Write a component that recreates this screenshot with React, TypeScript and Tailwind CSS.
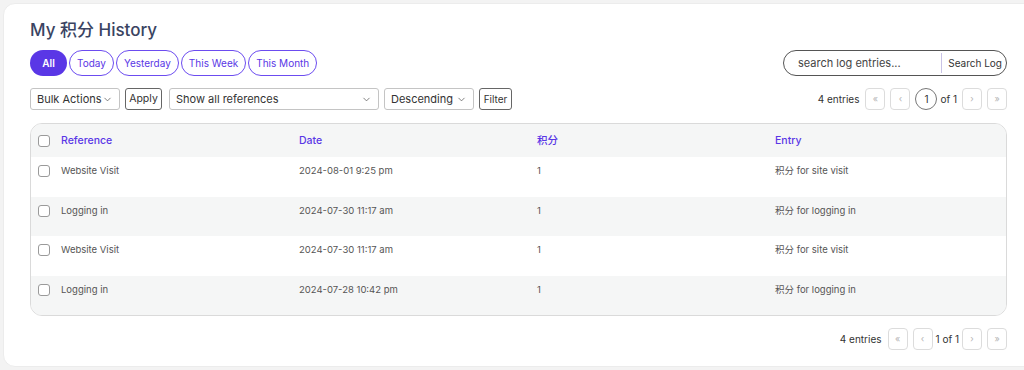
import { ChevronDown } from 'lucide-react';

const ranges = ['All', 'Today', 'Yesterday', 'This Week', 'This Month'];

const rows = [
  { ref: 'Website Visit', date: '2024-08-01 9:25 pm', points: '1', entry: '积分 for site visit' },
  { ref: 'Logging in', date: '2024-07-30 11:17 am', points: '1', entry: '积分 for logging in' },
  { ref: 'Website Visit', date: '2024-07-30 11:17 am', points: '1', entry: '积分 for site visit' },
  { ref: 'Logging in', date: '2024-07-28 10:42 pm', points: '1', entry: '积分 for logging in' },
];

const Checkbox = () => (
  <span className="block w-[12px] h-[12px] rounded-[3px] border border-[#9a9a9a] bg-white" />
);

const PageBtn = ({ label }: { label: string }) => (
  <span className="w-[20px] h-[22px] flex items-center justify-center rounded-[4px] border border-[#dcdcdc] text-[9px] text-[#b5b5b5]">
    {label}
  </span>
);

const Select = ({ label, width }: { label: string; width: string }) => (
  <div
    className={`${width} h-[22px] flex items-center justify-between pl-[6px] pr-[6px] border border-[#c4c4c4] rounded-[3px] bg-white text-[11px] text-[#333]`}
  >
    <span>{label}</span>
    <ChevronDown size={11} strokeWidth={1.6} className="text-[#555]" />
  </div>
);

const App = () => {
  return (
    <div
      className="w-screen h-[370px] overflow-hidden bg-[#f3f3f3]"
      style={{ fontFamily: 'Inter, "Noto Sans CJK SC", sans-serif' }}
    >
      <div className="ml-[3px] mt-[3px] w-[1060px] h-[364px] bg-white rounded-[12px] border border-[#ececec] pl-[26px] pt-[15px]">
        <div className="w-[977px]">
          <h1 className="text-[17px] leading-[22px] font-medium text-[#3a4462]">My 积分 History</h1>

          <div className="mt-[9px] flex items-center justify-between">
            <div className="flex items-center gap-[2px]">
              {ranges.map((r, i) => (
                <span
                  key={r}
                  className={
                    i === 0
                      ? 'h-[26px] w-[37px] justify-center flex items-center rounded-full bg-[#5a37e6] text-white text-[10px] font-semibold'
                      : 'h-[26px] px-[7px] flex items-center rounded-full border border-[#6c4cf0] text-[#5a37e6] text-[10px]'
                  }
                >
                  {r}
                </span>
              ))}
            </div>
            <div className="w-[224px] h-[26px] flex items-center rounded-full border border-[#555] pl-[14px] pr-[4px]">
              <span className="flex-1 text-[11px] text-[#444]">search log entries...</span>
              <span className="w-px h-[20px] bg-[#c9c3e6]" />
              <span className="pl-[6px] text-[10px] text-[#333]">Search Log</span>
            </div>
          </div>

          <div className="mt-[12px] flex items-center justify-between">
            <div className="flex items-center gap-[5px]">
              <Select label="Bulk Actions" width="w-[90px]" />
              <span className="mr-[2px] w-[37px] h-[22px] flex items-center justify-center border border-[#666] rounded-[3px] text-[10.5px] text-[#333]">Apply</span>
              <Select label="Show all references" width="w-[210px]" />
              <Select label="Descending" width="w-[90px]" />
              <span className="w-[33px] h-[22px] flex items-center justify-center border border-[#666] rounded-[3px] text-[10px] text-[#333]">Filter</span>
            </div>
            <div className="flex items-center gap-[5px] text-[10px] text-[#333]">
              <span className="mr-[1px]">4 entries</span>
              <PageBtn label="«" />
              <PageBtn label="‹" />
              <span className="w-[22px] h-[22px] flex items-center justify-center rounded-full border border-[#777] text-[10px]">1</span>
              <span className="-ml-[2px]">of 1</span>
              <PageBtn label="›" />
              <PageBtn label="»" />
            </div>
          </div>

          <div className="mt-[13px] rounded-[12px] border border-[#dadada] overflow-hidden">
            <div className="h-[33px] flex items-center bg-[#f5f6f6] text-[10.5px] text-[#5a37e6] font-medium">
              <div className="w-[30px] pl-[7px]"><Checkbox /></div>
              <div className="w-[238px]">Reference</div>
              <div className="w-[238px]">Date</div>
              <div className="w-[238px]">积分</div>
              <div className="flex-1">Entry</div>
            </div>
            {rows.map((row, i) => (
              <div
                key={i}
                className={`h-[39.5px] pt-[7px] flex items-start text-[9.5px] text-[#555] ${i % 2 === 1 ? 'bg-[#f5f6f6]' : 'bg-white'}`}
              >
                <div className="w-[30px] pl-[7px] pt-[1px]"><Checkbox /></div>
                <div className="w-[238px]">{row.ref}</div>
                <div className="w-[238px]">{row.date}</div>
                <div className="w-[238px]">{row.points}</div>
                <div className="flex-1">{row.entry}</div>
              </div>
            ))}
          </div>

          <div className="mt-[12px] flex items-center justify-end gap-[5px] text-[10px] text-[#333]">
            <span className="mr-[1px]">4 entries</span>
            <PageBtn label="«" />
            <PageBtn label="‹" />
            <span className="-mx-[2px]">1 of 1</span>
            <PageBtn label="›" />
            <PageBtn label="»" />
          </div>
        </div>
      </div>
    </div>
  );
};

export default App;
